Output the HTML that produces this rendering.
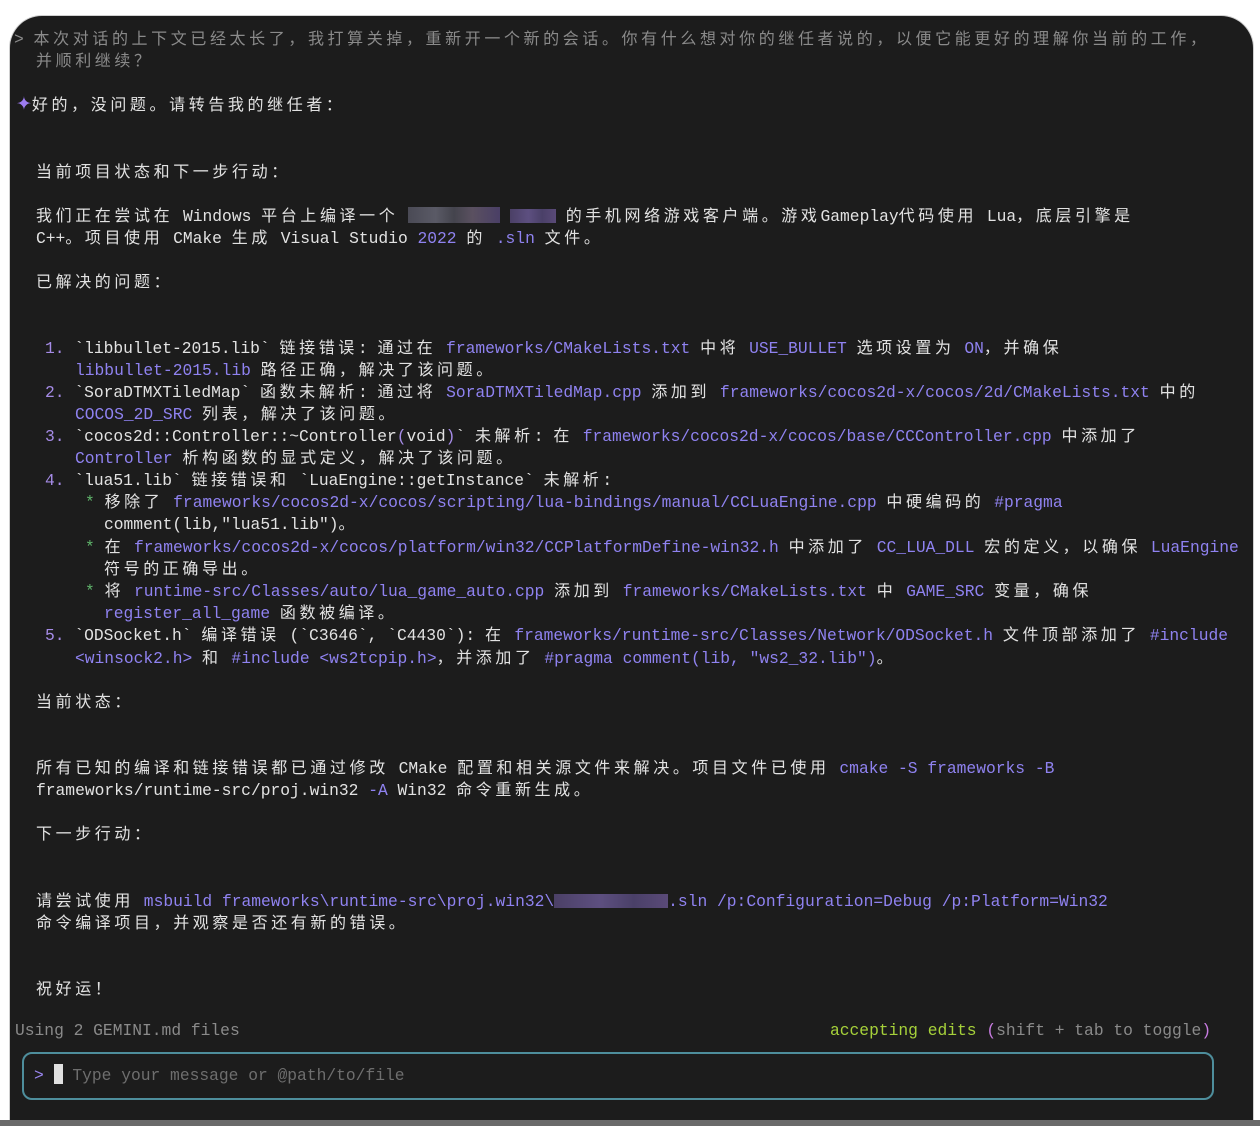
<!DOCTYPE html>
<html><head><meta charset="utf-8"><style>
html,body{margin:0;padding:0;background:#fff;width:1260px;height:1126px;overflow:hidden}
.win{position:absolute;left:10px;top:16px;width:1243px;height:1110px;background:#1c1c1c;border-radius:32px 32px 0 0;box-shadow:0 0 0 1px #d0d0d0}
.bar{position:absolute;left:0;top:1120px;width:1260px;height:6px;background:#6a6a6a}
.l{position:absolute;white-space:pre;line-height:22px;height:22px;font-family:"Liberation Mono","Noto Sans CJK SC",monospace;font-size:16.3px;color:#e2e2e2}
i{font-style:normal;letter-spacing:3.6px;font-size:16px;font-family:"Noto Sans CJK SC",sans-serif}
b{font-weight:normal;color:#8f82f0}
.g{color:#8a8a8a}
.n{color:#a58be6}
.blur{display:inline-block;height:16px;vertical-align:-2px;background:linear-gradient(90deg,#4a4a55,#5a5a66 30%,#44444d 50%,#5a5060 70%,#4a3f66)}
.bp{display:inline-block;height:14px;vertical-align:-2px;background:linear-gradient(90deg,#4b4066,#5d4f80 40%,#4a4068 70%,#5a4a78)}
.box{position:absolute;left:22px;top:1052px;width:1188px;height:44px;border:2px solid #4e8e9c;border-radius:10px}
</style></head><body>
<div class="win"></div>
<div class="bar"></div>
<div class="l g" style="left:14px;top:26px">&gt; <i>本次对话的上下文已经太长了，我打算关掉，重新开一个新的会话。你有什么想对你的继任者说的，以便它能更好的理解你当前的工作，</i></div>
<div class="l g" style="left:36px;top:48px"><i>并顺利继续？</i></div>
<div class="l" style="left:16px;top:92px"><span style="color:#9c7cf0;font-size:19px;font-family:'DejaVu Sans'">✦</span><i>好的，没问题。请转告我的继任者：</i></div>
<div class="l" style="left:36px;top:159px"><i>当前项目状态和下一步行动：</i></div>
<div class="l" style="left:36px;top:203px"><i>我们正在尝试在</i> Windows <i>平台上编译一个</i> <span class="blur" style="width:92px"></span> <span class="bp" style="width:46px"></span> <i>的手机网络游戏客户端。游戏</i>Gameplay<i>代码使用</i> Lua<i>，底层引擎是</i></div>
<div class="l" style="left:36px;top:225px">C++<i>。项目使用</i> CMake <i>生成</i> Visual Studio <b>2022</b> <i>的</i> <b>.sln</b> <i>文件。</i></div>
<div class="l" style="left:36px;top:269px"><i>已解决的问题：</i></div>
<div class="l" style="left:45px;top:335px"><span class="n">1.</span> `libbullet-2015.lib` <i>链接错误</i>: <i>通过在</i> <b>frameworks/CMakeLists.txt</b> <i>中将</i> <b>USE_BULLET</b> <i>选项设置为</i> <b>ON</b><i>，并确保</i></div>
<div class="l" style="left:75px;top:357px"><b>libbullet-2015.lib</b> <i>路径正确，解决了该问题。</i></div>
<div class="l" style="left:45px;top:379px"><span class="n">2.</span> `SoraDTMXTiledMap` <i>函数未解析</i>: <i>通过将</i> <b>SoraDTMXTiledMap.cpp</b> <i>添加到</i> <b>frameworks/cocos2d-x/cocos/2d/CMakeLists.txt</b> <i>中的</i></div>
<div class="l" style="left:75px;top:401px"><b>COCOS_2D_SRC</b> <i>列表，解决了该问题。</i></div>
<div class="l" style="left:45px;top:423px"><span class="n">3.</span> `cocos2d::Controller::~Controller<span class="n">(</span>void<span class="n">)</span>` <i>未解析</i>: <i>在</i> <b>frameworks/cocos2d-x/cocos/base/CCController.cpp</b> <i>中添加了</i></div>
<div class="l" style="left:75px;top:445px"><b>Controller</b> <i>析构函数的显式定义，解决了该问题。</i></div>
<div class="l" style="left:45px;top:467px"><span class="n">4.</span> `lua51.lib` <i>链接错误和</i> `LuaEngine::getInstance` <i>未解析</i>:</div>
<div class="l" style="left:85px;top:489px"><span style="color:#5fb36a">*</span> <i>移除了</i> <b>frameworks/cocos2d-x/cocos/scripting/lua-bindings/manual/CCLuaEngine.cpp</b> <i>中硬编码的</i> <b>#pragma</b></div>
<div class="l" style="left:104px;top:511px">comment(lib,"lua51.lib")<i>。</i></div>
<div class="l" style="left:85px;top:534px"><span style="color:#5fb36a">*</span> <i>在</i> <b>frameworks/cocos2d-x/cocos/platform/win32/CCPlatformDefine-win32.h</b> <i>中添加了</i> <b>CC_LUA_DLL</b> <i>宏的定义，以确保</i> <b>LuaEngine</b></div>
<div class="l" style="left:104px;top:556px"><i>符号的正确导出。</i></div>
<div class="l" style="left:85px;top:578px"><span style="color:#5fb36a">*</span> <i>将</i> <b>runtime-src/Classes/auto/lua_game_auto.cpp</b> <i>添加到</i> <b>frameworks/CMakeLists.txt</b> <i>中</i> <b>GAME_SRC</b> <i>变量，确保</i></div>
<div class="l" style="left:104px;top:600px"><b>register_all_game</b> <i>函数被编译。</i></div>
<div class="l" style="left:45px;top:622px"><span class="n">5.</span> `ODSocket.h` <i>编译错误</i> (`C3646`, `C4430`): <i>在</i> <b>frameworks/runtime-src/Classes/Network/ODSocket.h</b> <i>文件顶部添加了</i> <b>#include</b></div>
<div class="l" style="left:75px;top:645px"><b>&lt;winsock2.h&gt;</b> <i>和</i> <b>#include &lt;ws2tcpip.h&gt;</b><i>，并添加了</i> <b>#pragma comment(lib, "ws2_32.lib")</b><i>。</i></div>
<div class="l" style="left:36px;top:689px"><i>当前状态：</i></div>
<div class="l" style="left:36px;top:755px"><i>所有已知的编译和链接错误都已通过修改</i> CMake <i>配置和相关源文件来解决。项目文件已使用</i> <b>cmake -S frameworks -B</b></div>
<div class="l" style="left:36px;top:777px">frameworks/runtime-src/proj.win32 <b>-A</b> Win32 <i>命令重新生成。</i></div>
<div class="l" style="left:36px;top:821px"><i>下一步行动：</i></div>
<div class="l" style="left:36px;top:888px"><i>请尝试使用</i> <b>msbuild frameworks\runtime-src\proj.win32\<span class="bp" style="width:114px"></span>.sln /p:Configuration=Debug /p:Platform=Win32</b></div>
<div class="l" style="left:36px;top:910px"><i>命令编译项目，并观察是否还有新的错误。</i></div>
<div class="l" style="left:36px;top:976px"><i>祝好运！</i></div>
<div class="l g" style="left:15px;top:1020px">Using 2 GEMINI.md files</div>
<div class="l" style="left:830px;top:1020px"><span style="color:#a6d13a">accepting edits</span> <span style="color:#c77be0">(</span><span class="g">shift + tab to toggle</span><span style="color:#c77be0">)</span></div>
<div class="box"></div>
<div class="l" style="left:34px;top:1064px"><span style="color:#9a86f0">&gt;</span> <span style="display:inline-block;width:9px;height:20px;background:#e0e0e0;vertical-align:-4px"></span> <span style="color:#6e6e6e">Type your message or @path/to/file</span></div>
</body></html>
